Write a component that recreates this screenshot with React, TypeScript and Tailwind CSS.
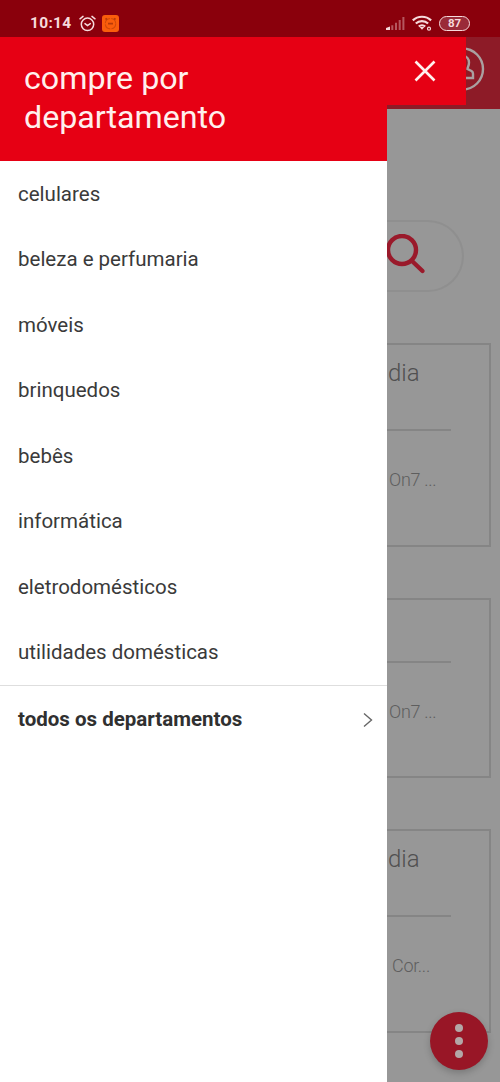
import { FC } from 'react';

const departments = [
  'celulares',
  'beleza e perfumaria',
  'móveis',
  'brinquedos',
  'bebês',
  'informática',
  'eletrodomésticos',
  'utilidades domésticas',
];

const StatusBar: FC = () => (
  <header className="flex h-[37px] shrink-0 items-center bg-[#8a000c] px-[30px] pt-[9px] text-[#f6dadc]">
    <span className="w-[42px] whitespace-nowrap pt-px text-[15.5px] font-bold leading-none tracking-[0.3px]">
      10:14
    </span>
    <svg className="ml-[7px] h-[17px] w-[17px]" viewBox="0 0 17 17" fill="none" stroke="currentColor" strokeWidth="1.5" strokeLinecap="round">
      <circle cx="8.5" cy="9.3" r="6.2" />
      <path d="M1 3.8 4 1.4M16 3.8 13 1.4M6 8.6l2.5 2 2.8-2" />
    </svg>
    <svg className="ml-[6px] h-[17px] w-[17px]" viewBox="0 0 17 17" fill="none">
      <rect width="17" height="17" rx="3" fill="#fa5d0c" />
      <circle cx="8.5" cy="8.7" r="5.2" stroke="#d24a0a" strokeWidth="1.1" strokeDasharray="7 1.2" />
      <path d="M3.5 4.5 5 3.3M13.5 4.5 12 3.3M6 8.7h5" stroke="#b83a08" strokeWidth="1.7" />
    </svg>

    <div className="ml-auto flex items-center">
      <svg className="h-[14px] w-[19px]" viewBox="0 0 19 14" fill="currentColor">
        <path d="M0 14v-2l4-1.5V14z" />
        <path d="M5.3 9.2h2V14h-2zM9 6.7h2V14H9zM12.7 4h2v10h-2zM16.4 1h2v13h-2z" opacity="0.4" />
      </svg>
      <svg className="ml-[7px] h-[16px] w-[20px]" viewBox="0 0 20 16" fill="none" stroke="currentColor" strokeWidth="2.2">
        <path d="M.8 5.4c5-4.9 13.3-4.9 18.3 0M3.8 8.5c3.4-3.3 8.9-3.3 12.3 0M6.8 11.5c1.8-1.7 4.6-1.7 6.4 0" />
        <path d="M7.6 12h4.8L10 14.8z" fill="currentColor" stroke="none" />
        <circle cx="17" cy="13.7" r="1.5" strokeWidth="1.2" />
      </svg>
      <div className="ml-[7px] flex h-[15px] w-[31px] items-center justify-center rounded-full border-[1.5px] border-current bg-[#9a2a38] pt-px text-[11.5px] font-bold leading-none">
        87
      </div>
    </div>
  </header>
);

const Drawer: FC = () => (
  <aside className="flex w-[387px] shrink-0 flex-col bg-white text-[#3a3a3a]">
    <h1 className="h-[124px] bg-[#e60014] pl-[24px] pt-[22px] text-[32.2px] leading-[39px] text-[#fff0ed]">
      compre por
      <br />
      departamento
    </h1>
    <nav className="flex h-[525px] flex-col border-b border-[#dedede]">
      {departments.map((name) => (
        <a key={name} className="flex flex-1 items-center pl-[18px] text-[20.5px] leading-none">
          {name}
        </a>
      ))}
    </nav>
    <a className="flex h-[67px] items-center justify-between pl-[18px] pr-[14px] text-[20.5px] font-bold leading-none text-[#303030]">
      todos os departamentos
      <svg className="mt-px h-4 w-[10px]" viewBox="0 0 10 16" fill="none" stroke="#666" strokeWidth="1.4">
        <path d="m1 1.5 7.5 6.5L1 14.5" />
      </svg>
    </a>
  </aside>
);

interface ProductCardProps {
  title?: string;
  name: string;
  className: string;
  nameClassName: string;
}

const ProductCard: FC<ProductCardProps> = ({ title, name, className, nameClassName }) => (
  <section className={`mr-[9px] flex shrink-0 flex-col border-2 border-l-0 border-[#858585] ${className}`}>
    {title && <h2 className="h-[68px] pl-px text-[24px] font-light leading-none text-[#505050]">{title}</h2>}
    <hr className="mr-[38px] border-0 border-t-2 border-[#858585]" />
    <p className={`whitespace-nowrap text-[18px] font-light leading-[20px] tracking-[-0.3px] text-[#5e5e5e] ${nameClassName}`}>
      {name}
    </p>
  </section>
);

/**
 * Store page, dimmed behind the open drawer
 */
const DimmedPage: FC = () => (
  <main className="relative flex min-w-0 flex-1 flex-col overflow-hidden bg-[#979797]">
    <div className="flex h-[72px] shrink-0 items-start bg-[#8d1b27] pl-[54px] pt-[10px]">
      <svg className="h-[44px] w-[44px] shrink-0" viewBox="0 0 44 44" fill="none" stroke="#aaa0a0" strokeWidth="2.4">
        <circle cx="21.5" cy="22" r="20.5" />
        <path d="M21.500 9c4.500 0 6.500 3 6.500 6.500S26.500 20 26.500 22l4 2c1 .6 1.500 1.500 1.500 2.700V31H11v-4.300c0-1.200.5-2.100 1.500-2.700l4-2c0-2-1.500-3-1.500-6.500S17 9 21.500 9z" />
      </svg>
    </div>

    {/* Search field */}
    <div className="mb-[51px] mr-9 mt-[111px] flex h-[72px] shrink-0 rounded-r-full border-2 border-l-0 border-[#8f8f8f] pt-[12px]">
      <svg className="h-[42px] w-[40px] shrink-0" viewBox="0 0 40 42" fill="none" stroke="#9a1a2b" strokeWidth="4.4">
        <circle cx="15" cy="16" r="14" />
        <path d="m25 27 10.5 10" strokeLinecap="round" />
      </svg>
    </div>

    <ProductCard title="dia" name="On7 ..." className="mb-[51px] h-[204px] pt-[16px]" nameClassName="mt-[39px] pl-[2px]" />
    <ProductCard name="On7 ..." className="mb-[51px] h-[180px] pt-[61px]" nameClassName="mt-[39px] pl-[2px]" />
    <ProductCard title="dia" name="Cor..." className="h-[204px] pt-[16px]" nameClassName="mt-[39px] pl-[5px]" />

    {/* Close button over the page header */}
    <button className="absolute left-0 top-0 flex h-[68px] w-[79px] items-center justify-center bg-[#e60014]">
      <svg className="-ml-[3px] h-[22px] w-[22px]" viewBox="0 0 22 22" fill="none" stroke="#fff0ed" strokeWidth="2.6">
        <path d="m1.500 1.500 19 19m0-19-19 19" />
      </svg>
    </button>

    {/* Floating menu button */}
    <button className="absolute bottom-[12px] right-[12px] flex h-[58px] w-[58px] flex-col items-center justify-center gap-[5px] rounded-full bg-[#981626] shadow-[0_3px_7px_rgba(0,0,0,0.2)]">
      <span className="h-2 w-2 rounded-full bg-[#b3a7a7]" />
      <span className="h-2 w-2 rounded-full bg-[#b3a7a7]" />
      <span className="h-2 w-2 rounded-full bg-[#b3a7a7]" />
    </button>
  </main>
);

export default function App() {
  return (
    <div className="flex h-[1082px] w-[500px] flex-col overflow-hidden font-['Roboto',sans-serif]">
      <StatusBar />
      <div className="flex min-h-0 flex-1">
        <Drawer />
        <DimmedPage />
      </div>
    </div>
  );
}
